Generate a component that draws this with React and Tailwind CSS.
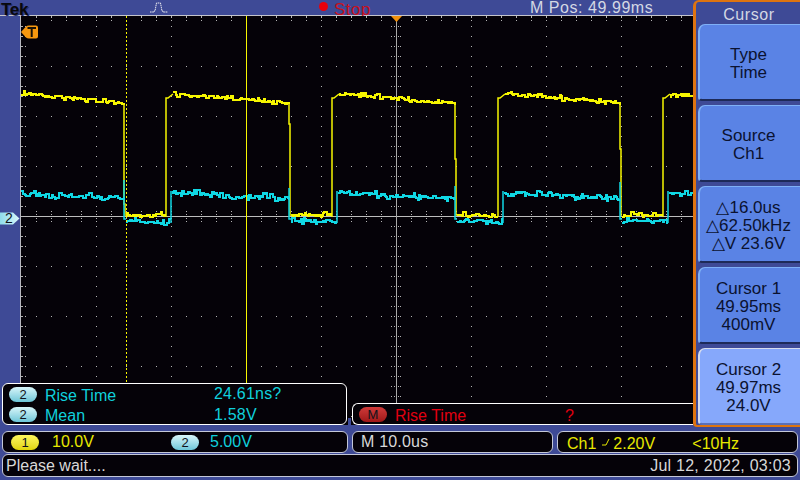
import React from 'react';

// small repeatable noise so the traces look the same on every render
function makeRand(seed) {
  let s = seed;
  return () => {
    s = (s * 1664525 + 1013904223) % 4294967296;
    return s / 4294967296;
  };
}

const RISES = [0, 166, 332, 498, 663];
const FALLS = [125, 290, 456, 621];
const FALL_STEP = [205, 125, 160, 150];
const SPIKE = [181, 189, 187, 183];

function noisy(rand, x0, x1, y0, y1, span, amp) {
  let d = '';
  let hold = 0;
  let off = 0;
  for (let x = Math.round(x0); x < x1; x++) {
    if (hold-- <= 0) {
      off = (rand() - 0.5) * amp;
      if (rand() > 0.75) off += rand() > 0.5 ? amp * 0.8 : -amp * 0.8;
      hold = Math.floor(rand() * 3);
    }
    const t = (x - x0) / span;
    const y = Math.round(y0 + (y1 - y0) * t + off);
    d += `${d ? 'L' : 'M'}${x} ${y}H${x + 1}`;
  }
  return d;
}

function buildTraces() {
  const rand = makeRand(7);
  let yBody = '';
  let yEdge = '';
  let cBody = '';
  let cEdge = '';
  RISES.forEach((r, i) => {
    const f = FALLS[i] ?? 694;
    if (i === 0) {
      yBody += noisy(rand, 21, f, 94.5, 104.5, 104, 2.4);
      cBody += noisy(rand, 21, f, 195.5, 199, 104, 3);
    } else {
      // high part, slowly sagging
      yBody += noisy(rand, r + 7, f, 95, 104.5, 117, 2.4);
      cBody += noisy(rand, r + 6, f, 193.5, 199.5, 118, 3);
      yEdge += `M${r} 218V99H${r + 2}L${r + 7} 95`;
      cEdge += `M${r + 5} 224V192`;
    }
    if (i < 4) {
      yEdge += `M${f - 1} 104V${FALL_STEP[i]}H${f}V217`;
      cEdge += `M${f - 1} ${SPIKE[i]}V220H${f + 1}`;
      // low part
      const next = RISES[i + 1];
      yBody += noisy(rand, f + 1, next, 216.5, 216.5, 41, 2.8);
      cBody += noisy(rand, f + 1, next + 5, 222, 222.5, 46, 2.8);
    }
  });
  return { yBody, yEdge, cBody, cEdge };
}

function gridDots() {
  const dots = [];
  const add = (x, y, w = 1, h = 1) => dots.push({ x, y, w, h });
  for (let x = 36; x < 695; x += 15) {
    add(x, 17, 1, 2);
    add(x, 21);
    for (let y = 67; y < 420; y += 50) add(x, y);
    add(x, 212);
    add(x, 215);
    add(x, 219);
    add(x, 222);
  }
  for (let y = 27; y < 425; y += 10) {
    add(21, y, 2, 1);
    add(25, y);
    for (let x = 96; x < 695; x += 75) add(x, y);
    add(391, y);
    add(394, y);
    add(398, y);
    add(400, y);
  }
  return dots;
}

function Pill({ label, tone }) {
  const tones = {
    cyan: 'bg-gradient-to-b from-[#d8f6fa] to-[#6cc6d8]',
    yellow: 'bg-gradient-to-b from-[#fff75a] to-[#e0d400]',
    red: 'bg-gradient-to-b from-[#d03a3a] to-[#a01818]',
  };
  return (
    <span className={`flex h-[15px] w-[28px] shrink-0 items-center justify-center rounded-full text-[13px] leading-none text-[#10131c] ${tones[tone]}`}>
      {label}
    </span>
  );
}

function MenuButton({ lines, active }) {
  return (
    <div
      className={`flex h-[77px] shrink-0 flex-col items-center justify-center rounded-tl-[7px] rounded-bl-[4px] border-t border-l-2 border-b-2 pt-[4px] pr-[3px] text-[17px] leading-[18px] text-[#0b1230] ${
        active
          ? 'border-t-[#d6dcec] border-l-[#d6dcec] border-b-[#5a6fb8] bg-[#86a8fb]'
          : 'border-t-[#7fb0f6] border-l-[#7fb0f6] border-b-[#1d2a58] bg-[#5a83e5]'
      }`}
    >
      {lines.map((l) => (
        <span key={l} className="whitespace-nowrap">{l}</span>
      ))}
    </div>
  );
}

export default function App() {
  const { yBody, yEdge, cBody, cEdge } = buildTraces();
  const dots = gridDots();

  return (
    <div className="relative flex h-[480px] w-[800px] flex-col overflow-hidden bg-[#3e4a96] font-['Liberation_Sans',sans-serif]">
      <div className="flex h-[427px] shrink-0">
        <div className="flex w-[693px] shrink-0 flex-col">
          {/* status line on top */}
          <div className="flex h-[16px] shrink-0 items-center border-b border-[#c4c4cc] text-[16px] leading-[16px]">
            <span className="ml-[1px] w-[149px] self-start text-[17px] leading-[20px] font-bold tracking-[-0.3px] text-[#08080c] [text-shadow:1px_1px_0_#27306a]">Tek</span>
            <svg width="18" height="11" viewBox="0 0 18 11" className="shrink-0">
              <path d="M0 10H4V9H5L6.5 1H10.5L12 9H13V10H18" fill="none" stroke="#e8e8f0" strokeWidth="1" strokeDasharray="1.6 0.6" />
            </svg>
            <span className="ml-[151px] h-[9px] w-[9px] shrink-0 -translate-y-[1px] rounded-full bg-[#e8000c]" />
            <span className="ml-[6px] w-[196px] pt-[4px] text-[17px] tracking-[0.5px] text-[#c8101c]">Stop</span>
            <span className="pt-[1px] whitespace-nowrap tracking-[0.55px] text-[#d4d8e4]">M Pos: 49.99ms</span>
          </div>

          <div className="flex min-h-0 flex-1">
            <div className="w-[20px] shrink-0" />
            <div className="relative h-[409px] flex-1 border-l border-[#b8b8c0] bg-[#050208]">
              <svg className="block h-full w-full" viewBox="21 17 672 409" shapeRendering="crispEdges">
                {dots.map((d, i) => (
                  <rect key={i} x={d.x} y={d.y} width={d.w} height={d.h} fill="#b4b4b4" />
                ))}
                <path d="M21 217.5H693" stroke="#bdbdbd" strokeWidth="1" />
                <path d="M396.5 17V404" stroke="#a8a8a8" strokeWidth="1" />
                <path d={yEdge} fill="none" stroke="#f6f600" strokeWidth="1.5" shapeRendering="auto" />
                <path d={yBody} fill="none" stroke="#f6f600" strokeWidth="2" />
                <path d={cEdge} fill="none" stroke="#10d8e4" strokeWidth="1.5" shapeRendering="auto" />
                <path d={cBody} fill="none" stroke="#10d8e4" strokeWidth="2" />
                <path d="M126.5 17V404" stroke="#f6f600" strokeWidth="1" strokeDasharray="2 2" />
                <path d="M246.5 17V384" stroke="#f6f600" strokeWidth="1" />
                <path d="M391 17H402L396.5 23Z" fill="#f0900c" shapeRendering="auto" />
              </svg>
            </div>
          </div>
        </div>

        {/* cursor side menu */}
        <div className="flex w-[107px] shrink-0 flex-col gap-[4px] rounded-tl-[6px] rounded-bl-[4px] border-t-2 border-b-2 border-l-[3px] border-[#de7410] bg-[#3e4a96] pl-[2px]">
          <div className="-mb-[4px] flex h-[22px] shrink-0 items-center justify-center pt-[4px] text-[16px] tracking-[0.6px] text-[#d4d8e4]">Cursor</div>
          <MenuButton lines={['Type', 'Time']} />
          <MenuButton lines={['Source', 'Ch1']} />
          <MenuButton lines={['△16.0us', '△62.50kHz', '△V 23.6V']} />
          <MenuButton lines={['Cursor 1', '49.95ms', '400mV']} />
          <MenuButton lines={['Cursor 2', '49.97ms', '24.0V']} active />
        </div>
      </div>

      <div className="mt-[4px] flex h-[22px] shrink-0 gap-[4px] px-[2px] text-[16px]">
        <div className="flex w-[346px] items-center rounded-[6px] border border-[#c4c8d8] bg-[#050208] pl-[8px]">
          <Pill label="1" tone="yellow" />
          <span className="ml-[13px] w-[119px] text-[#e8e800]">10.0V</span>
          <Pill label="2" tone="cyan" />
          <span className="ml-[11px] text-[#10d0dc]">5.00V</span>
        </div>
        <div className="flex w-[201px] items-center rounded-[6px] border border-[#c4c8d8] bg-[#050208] pl-[8px] text-[#d8d8d8]">
          <span className="tracking-[0.2px]">M 10.0us</span>
        </div>
        <div className="flex flex-1 items-center rounded-[6px] border border-[#c4c8d8] bg-[#050208] pt-[3px] pl-[9px] text-[#e8e800]">
          <span>Ch1</span>
          <svg width="10" height="10" viewBox="0 0 10 10" className="ml-[5px] shrink-0 -translate-y-[2px]">
            <path d="M1 8L5 8M5 8L8 2" fill="none" stroke="#e8e800" strokeWidth="1" />
          </svg>
          <span className="ml-[2px] w-[79px]">2.20V</span>
          <span>&lt;10Hz</span>
        </div>
      </div>

      <div className="mt-[1px] mx-[2px] flex h-[23px] shrink-0 items-center justify-between rounded-[6px] border border-[#c4c8d8] bg-[#050208] pr-[6px] pl-[3px] text-[16px] text-[#d8d8d8]">
        <span>Please wait....</span>
        <span className="tracking-[0.25px]">Jul 12, 2022, 03:03</span>
      </div>

      {/* measurement readouts sit over the graticule */}
      <div className="absolute top-[383px] left-[2px] flex h-[42px] w-[345px] flex-col justify-center gap-[4px] rounded-[6px] border border-white bg-[#050208] pl-[6px] text-[16px] leading-[16px] text-[#10d0dc]">
        <div className="flex h-[16px] items-center">
          <Pill label="2" tone="cyan" />
          <span className="ml-[8px] w-[169px] pt-[3px]">Rise Time</span>
          <span className="tracking-[0.2px]">24.61ns?</span>
        </div>
        <div className="flex h-[16px] items-center">
          <Pill label="2" tone="cyan" />
          <span className="ml-[8px] w-[169px] pt-[3px]">Mean</span>
          <span className="pt-[1px] tracking-[0.2px]">1.58V</span>
        </div>
      </div>
      <div className="absolute top-[403px] left-[352px] flex h-[22px] w-[341px] items-center rounded-l-[6px] border border-r-0 border-white bg-[#050208] pl-[6px] text-[16px] leading-[16px] text-[#e00010]">
        <Pill label="M" tone="red" />
        <span className="ml-[8px] w-[170px] pt-[3px]">Rise Time</span>
        <span className="pt-[3px]">?</span>
      </div>
      <div className="absolute top-[418px] left-[348px] h-[7px] w-[3px] bg-[#3e4a96]" />
      <svg className="absolute top-[25px] left-[21px]" width="18" height="14" viewBox="0 0 18 14">
        <path d="M0 7L5 1.5Q6 0.5 8 0.5H15Q17 0.5 17 2.5V11.5Q17 13.5 15 13.5H8Q6 13.5 5 12.5Z" fill="#f7980f" />
        <path d="M6.5 3H15M10.7 3V12" stroke="#1a1206" strokeWidth="2" fill="none" />
      </svg>
      <svg className="absolute top-[212px] left-0" width="20" height="13" viewBox="0 0 20 13">
        <defs>
          <linearGradient id="ch2" x1="0" y1="0" x2="1" y2="0">
            <stop offset="0" stopColor="#8fdcea" />
            <stop offset="1" stopColor="#d8f6fa" />
          </linearGradient>
        </defs>
        <path d="M0 0.5H13L19.5 6.5L13 12.5H0Z" fill="url(#ch2)" />
      </svg>
      <span className="absolute top-[212px] left-[5px] text-[14px] leading-[13px] text-[#10131c]">2</span>
    </div>
  );
}
